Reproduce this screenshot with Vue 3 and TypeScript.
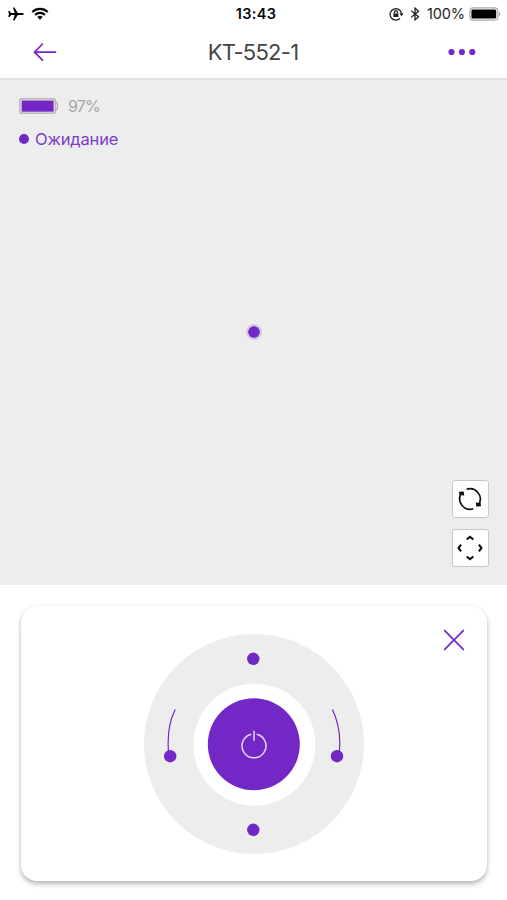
<script setup lang="ts">
import { ref } from 'vue'

const deviceName = ref('KT-552-1')
const clock = ref('13:43')
const phoneCharge = ref(100)
const robotCharge = ref(97)
const robotState = ref('Ожидание')
</script>

<template>
  <div class="screen">
    <div class="status-bar">
      <div class="status-left">
        <svg class="plane" width="16" height="14" viewBox="0 0 16 14">
          <path d="M15.7 7c0 .6-.7 1-1.500 1H9.800l-3.400 5.500H5L6.700 8H3.100L1.600 10H.3L.9 7 .3 4h1.300L3.100 6h3.600L5 .5h1.400L9.800 6h4.400c.8 0 1.500.4 1.500 1z" />
        </svg>
        <svg class="wifi" width="18" height="13" viewBox="0 0 18 13">
          <path d="M1.300 5a11 11 0 0 1 15.400 0M4.100 7.900a7 7 0 0 1 9.800 0" />
          <path class="wifi-dot" d="M6.300 10.100a3.800 3.800 0 0 1 5.400 0L9 12.800z" />
        </svg>
      </div>
      <div class="clock">{{ clock }}</div>
      <div class="status-right">
        <svg class="lock" width="15" height="14" viewBox="0 0 15 14">
          <path d="M11 11.300A5.700 5.700 0 1 1 12.500 6.500" />
          <path class="solid" d="M10.400 6.300h4.300l-2.200 2.900zM4.400 6.400h5v3.700h-5z" />
          <path d="M5.400 6.600V5.200a1.500 1.500 0 0 1 3 0v1.400" />
        </svg>
        <svg class="bluetooth" width="10" height="14" viewBox="0 0 10 14">
          <path d="M1.200 3.700l7.300 6L5 12.900V1.100l3.500 3.200-7.300 6" />
        </svg>
        <span class="phone-charge">{{ phoneCharge }}%</span>
        <svg class="phone-battery" width="32" height="14" viewBox="0 0 32 14">
          <rect class="shell" x=".8" y=".8" width="28" height="12.400" rx="3.200" />
          <rect x="2.400" y="2.400" width="24.800" height="9.200" rx="1.500" />
          <path class="cap" d="M30 4.700q3 2.300 0 4.600z" />
        </svg>
      </div>
    </div>

    <header class="nav">
      <button class="icon-button back" aria-label="Назад">
        <svg width="24" height="20" viewBox="0 0 24 20">
          <path d="M23.200 10.200H1.500M10 1.500L1.500 10.200l8.500 8.500" />
        </svg>
      </button>
      <h1 class="title">{{ deviceName }}</h1>
      <button class="icon-button more" aria-label="Меню">
        <svg width="28" height="8" viewBox="0 0 28 8">
          <circle cx="3.500" cy="4" r="3.100" />
          <circle cx="13.900" cy="4" r="3.100" />
          <circle cx="24.300" cy="4" r="3.100" />
        </svg>
      </button>
    </header>

    <main class="map">
      <div class="robot-info">
        <div class="charge-row">
          <svg width="40" height="16" viewBox="0 0 40 16">
            <path class="outline" d="M2 .8h32.800q1.400 0 1.400 1.400v1.900h.8c.9 0 1.400.9 1.400 1.900v4c0 1-.5 1.900-1.400 1.900h-.8v1.900q0 1.400-1.400 1.400H2q-1.200 0-1.200-1.400v-11.600Q.8.8 2 .8zM36.200 4v8" />
            <rect class="level" x="2.600" y="2.500" width="32" height="11.200" />
          </svg>
          <span class="charge">{{ robotCharge }}%</span>
        </div>
        <div class="state-row"><i class="state-dot"></i><span class="state">{{ robotState }}</span></div>
      </div>
      <i class="robot"></i>
      <div class="tools">
        <button class="tool" aria-label="Повернуть">
          <svg width="24" height="24" viewBox="0 0 24 24">
            <path d="M8.600 2.300A10.300 10.300 0 0 1 21.200 16.600M15.400 21.700A10.300 10.300 0 0 1 2.800 7.400" />
            <path class="solid" d="M1 4.700l4.700-.3.500 4.300-2.400-.8-2.300.9zM23 19.300l-4.700.3-.5-4.300 2.400.8 2.300-.9z" />
          </svg>
        </button>
        <button class="tool" aria-label="Центрировать">
          <svg class="arrows" width="28" height="28" viewBox="0 0 28 28">
            <path d="M10.600 5.500L14 2.900l3.400 2.600M10.600 22.500l3.400 2.600 3.400-2.600M5.100 10.600L2.500 14l2.600 3.400M22.900 10.600l2.600 3.400-2.600 3.400" />
          </svg>
        </button>
      </div>
    </main>

    <section class="remote">
      <button class="icon-button close" aria-label="Закрыть">
        <svg width="22" height="22" viewBox="0 0 22 22">
          <path d="M1.200 1.200l19.600 19.600M20.800 1.200L1.200 20.800" />
        </svg>
      </button>
      <svg class="dial" width="220" height="220" viewBox="0 0 220 220">
        <circle class="ring" cx="110" cy="110" r="110" />
        <circle class="gap" cx="110.400" cy="110.700" r="61" />
        <circle class="accent" cx="109.800" cy="110.300" r="46" />
        <circle class="accent" cx="109.300" cy="24.800" r="6.200" />
        <circle class="accent" cx="109.300" cy="195.800" r="6.200" />
        <circle class="accent" cx="26.200" cy="122.200" r="6.200" />
        <circle class="accent" cx="193" cy="122.200" r="6.200" />
        <path class="turn" d="M31.200 75.500Q22.300 93 24.600 119M188.400 75.500Q197.800 95 195.200 119" />
        <path class="power" d="M107.200 100.200a12 12 0 1 0 5.600 0M110 96.800v10" />
      </svg>
    </section>
  </div>
</template>

<style>
body {
  margin: 0;
  background: #fff;
}
</style>

<style scoped>
.screen {
  display: flex;
  flex-direction: column;
  width: 100%;
  height: 900px;
  overflow: hidden;
  box-sizing: border-box;
  background: #fff;
  font-family: Inter, Roboto, "Liberation Sans", sans-serif;
}

button {
  padding: 0;
  margin: 0;
  cursor: pointer;
}

svg {
  display: block;
  flex: none;
}

.status-bar {
  display: grid;
  grid-template-columns: 1fr auto 1fr;
  align-items: center;
  height: 27px;
  padding: 0 6px 0 8px;
  color: #080808;
}

.status-left,
.status-right {
  display: flex;
  align-items: center;
}

.status-left {
  gap: 7px;
}

.status-right {
  justify-content: flex-end;
}

.wifi {
  fill: none;
  stroke: #050505;
  stroke-width: 2.2;
}

.wifi .wifi-dot {
  fill: #050505;
  stroke: none;
}

.clock {
  padding-left: 3px;
  font-size: 14.5px;
  font-weight: 600;
  letter-spacing: 0.35px;
}

.lock,
.bluetooth {
  fill: none;
  stroke: #222;
  stroke-width: 1.3;
}

.bluetooth {
  margin-left: 6px;
}

.lock .solid {
  fill: #222;
  stroke: none;
}

.phone-charge {
  margin-left: 7px;
  font-size: 14.5px;
  letter-spacing: -0.1px;
  color: #222;
}

.phone-battery {
  margin-left: 4px;
}

.phone-battery .shell {
  fill: none;
  stroke: #aaa;
  stroke-width: 1.2;
}

.phone-battery .cap {
  fill: #aaa;
}

.nav {
  display: flex;
  align-items: center;
  justify-content: space-between;
  height: 51px;
  padding: 0 31px 2px 33px;
  box-sizing: border-box;
}

.icon-button {
  border: 0;
  background: none;
}

.back svg,
.close svg {
  fill: none;
  stroke: #7328c6;
  stroke-width: 1.7;
}

.more svg {
  fill: #7328c6;
}

.title {
  margin: 0;
  padding-left: 1px;
  font-size: 22px;
  font-weight: 400;
  line-height: 28px;
  letter-spacing: -0.75px;
  color: #444;
}

.map {
  position: relative;
  height: 507px;
  box-sizing: border-box;
  border-top: 2px solid #e1e1e1;
  background: #ededed;
}

.robot-info {
  padding: 18px 0 0 19px;
}

.charge-row,
.state-row {
  display: flex;
  align-items: center;
}

.charge-row {
  height: 16px;
}

.outline {
  fill: none;
  stroke: #aaa;
  stroke-width: 1.2;
}

.level {
  fill: #7328c6;
}

.charge {
  margin-left: 9px;
  font-size: 16px;
  letter-spacing: -0.85px;
  color: #a5a5a5;
}

.state-row {
  height: 20px;
  margin-top: 15px;
}

.state-dot {
  width: 10px;
  height: 10px;
  border-radius: 50%;
  background: #7328c6;
}

.state {
  margin-left: 6px;
  font-size: 16.5px;
  letter-spacing: -0.15px;
  color: #7e3bc9;
}

.robot {
  position: absolute;
  left: 246px;
  top: 244px;
  width: 12px;
  height: 12px;
  border: 2px solid #d5c8e2;
  border-radius: 50%;
  background: #7328c6;
  background-clip: padding-box;
}

.tools {
  position: absolute;
  right: 18px;
  bottom: 18px;
  display: flex;
  flex-direction: column;
  gap: 11px;
}

.tool {
  display: flex;
  align-items: center;
  justify-content: center;
  width: 37px;
  height: 38px;
  padding-right: 1px;
  box-sizing: border-box;
  border: 1px solid #c8c8c8;
  border-radius: 3px;
  background: #fff;
}

.tool svg {
  fill: none;
  stroke: #111;
  stroke-width: 1.7;
}

.tool .arrows {
  stroke-width: 2.1;
}

.tool .solid {
  fill: #111;
  stroke: none;
}

.remote {
  position: relative;
  display: flex;
  justify-content: center;
  height: 275px;
  box-sizing: border-box;
  margin: 21px 20px 0 21px;
  padding-top: 28px;
  border-radius: 16px;
  background: #fff;
  box-shadow: 0 3px 5px rgba(0, 0, 0, 0.28), 0 0 2px rgba(0, 0, 0, 0.08);
}

.close {
  position: absolute;
  top: 23px;
  right: 22px;
}

.ring {
  fill: #ededed;
}

.gap {
  fill: #fff;
}

.accent {
  fill: #7328c6;
}

.turn {
  fill: none;
  stroke: #7328c6;
  stroke-width: 1.2;
}

.power {
  fill: none;
  stroke: #e6d5f7;
  stroke-width: 1.5;
}
</style>
